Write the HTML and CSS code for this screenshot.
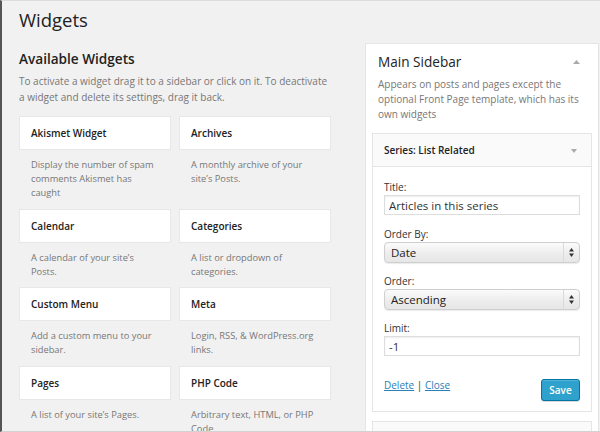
FILE: index.html
```html
<!DOCTYPE html>
<html lang="en">
<head>
<meta charset="utf-8">
<title>Widgets</title>
<link rel="stylesheet" href="styles.css">
</head>
<body>
<div class="screen">
  <span class="menu-marker"></span>
  <h1 class="page-title">Widgets</h1>
  <div class="columns">
    <section class="available">
      <h2 class="available-title">Available Widgets</h2>
      <p class="intro">To activate a widget drag it to a sidebar or click on it. To deactivate a widget and delete its settings, drag it back.</p>
      <div class="widget-grid">
        <div class="widget"><div class="widget-top">Akismet Widget</div><p class="widget-desc">Display the number of spam comments Akismet has caught</p></div>
        <div class="widget"><div class="widget-top">Archives</div><p class="widget-desc">A monthly archive of your site’s Posts.</p></div>
        <div class="widget"><div class="widget-top">Calendar</div><p class="widget-desc">A calendar of your site’s Posts.</p></div>
        <div class="widget"><div class="widget-top">Categories</div><p class="widget-desc">A list or dropdown of categories.</p></div>
        <div class="widget"><div class="widget-top">Custom Menu</div><p class="widget-desc">Add a custom menu to your sidebar.</p></div>
        <div class="widget"><div class="widget-top">Meta</div><p class="widget-desc">Login, RSS, &amp; WordPress.org links.</p></div>
        <div class="widget"><div class="widget-top">Pages</div><p class="widget-desc">A list of your site’s Pages.</p></div>
        <div class="widget"><div class="widget-top">PHP Code</div><p class="widget-desc">Arbitrary text, HTML, or PHP Code</p></div>
      </div>
    </section>
    <aside class="sidebar-panel">
      <div class="sidebar-head">
        <h3 class="sidebar-title">Main Sidebar</h3>
        <svg class="arrow-up" width="7" height="4" viewBox="0 0 7 4"><path d="M0 4L3.5 0L7 4z" fill="#aaa"/></svg>
      </div>
      <p class="sidebar-desc">Appears on posts and pages except the optional Front Page template, which has its own widgets</p>
      <div class="sidebar-widgets">
        <div class="sw">
          <div class="sw-top">
            <span class="sw-title">Series: List Related</span>
            <svg class="arrow-down" width="6" height="4" viewBox="0 0 6 4"><path d="M0 0L3 4L6 0z" fill="#aaa"/></svg>
          </div>
          <div class="sw-form">
            <div class="field">
              <label class="field-label">Title:</label>
              <input class="text-input" type="text" value="Articles in this series">
            </div>
            <div class="field field-select">
              <label class="field-label">Order By:</label>
              <div class="select"><span class="select-val">Date</span><span class="select-arrows"><svg width="5" height="9" viewBox="0 0 5 9"><path d="M0 3.6L2.5 0L5 3.6z M0 5.4L2.5 9L5 5.4z" fill="#333"/></svg></span></div>
            </div>
            <div class="field field-select">
              <label class="field-label">Order:</label>
              <div class="select"><span class="select-val">Ascending</span><span class="select-arrows"><svg width="5" height="9" viewBox="0 0 5 9"><path d="M0 3.6L2.5 0L5 3.6z M0 5.4L2.5 9L5 5.4z" fill="#333"/></svg></span></div>
            </div>
            <div class="field">
              <label class="field-label">Limit:</label>
              <input class="text-input" type="text" value="-1">
            </div>
            <div class="actions">
              <span class="links"><a class="link" href="#">Delete</a> | <a class="link" href="#">Close</a></span>
              <button class="save" type="button">Save</button>
            </div>
          </div>
        </div>
        <div class="sw sw-collapsed"></div>
      </div>
    </aside>
  </div>
</div>
</body>
</html>
```
FILE: styles.css
```css
html, body {
  margin: 0;
  padding: 0;
  background: #f1f1f1;
}
body {
  font-family: "Open Sans", "DejaVu Sans", sans-serif;
  color: #333;
}
.screen {
  position: relative;
  width: 600px;
  height: 432px;
  box-sizing: border-box;
  border-top: 1px solid #dcdcdc;
  border-left: 2px solid #555;
  border-bottom: 1px solid #d2d2d2;
  overflow: hidden;
}
.menu-marker {
  position: absolute;
  left: -2px;
  top: 151px;
  width: 2px;
  height: 28px;
  background: #2ea2cc;
}
.menu-marker::after {
  content: "";
  position: absolute;
  left: 1px;
  top: 9px;
  width: 1px;
  height: 9px;
  background: #f1f1f1;
}
.page-title {
  margin: 0;
  padding: 7px 0 0 17px;
  font-size: 18.5px;
  line-height: 24px;
  font-weight: 400;
  color: #222;
}
.columns {
  display: flex;
  align-items: flex-start;
  margin-top: 11px;
  padding-left: 17px;
}
.available {
  width: 312px;
  padding-top: 7px;
}
.available-title {
  margin: 0;
  font-size: 13.6px;
  line-height: 18px;
  font-weight: 600;
  color: #222;
}
.intro {
  margin: 5px 0 0;
  font-size: 10px;
  line-height: 16px;
  color: #777;
}
.widget-grid {
  margin-top: 11px;
  display: grid;
  grid-template-columns: 152px 152px;
  column-gap: 8px;
}
.widget-top {
  height: 34px;
  box-sizing: border-box;
  border: 1px solid #e7e7e7;
  background: #fff;
  padding: 0 11px;
  font-size: 10px;
  line-height: 32px;
  font-weight: 600;
  color: #222;
}
.widget-desc {
  margin: 0;
  padding: 8px 12px 8.5px;
  font-size: 9.3px;
  line-height: 14px;
  color: #777;
}
.sidebar-panel {
  margin-left: 34px;
  width: 234px;
  box-sizing: border-box;
  border: 1px solid #e5e5e5;
  background: #fff;
}
.sidebar-head {
  display: flex;
  justify-content: space-between;
  align-items: center;
  padding: 9px 18px 0 12px;
}
.sidebar-title {
  margin: 0;
  font-size: 13.6px;
  line-height: 18px;
  font-weight: 400;
  color: #222;
}
.arrow-up {
  display: block;
  margin-top: -1px;
}
.sidebar-desc {
  margin: 5.5px 0 0;
  padding: 0 8px 0 12px;
  font-size: 10px;
  line-height: 15px;
  color: #777;
}
.sidebar-widgets {
  padding: 11.5px 6px 0;
}
.sw {
  border: 1px solid #e5e5e5;
  background: #fff;
}
.sw-top {
  height: 33px;
  box-sizing: border-box;
  border-bottom: 1px solid #e5e5e5;
  background: #fafafa;
  display: flex;
  justify-content: space-between;
  align-items: center;
  padding: 0 14px 0 11px;
}
.sw-title {
  font-size: 10px;
  font-weight: 600;
  color: #222;
  line-height: 32px;
}
.arrow-down {
  display: block;
  margin-top: 1px;
}
.sw-form {
  padding: 13px 11px 10px;
}
.field {
  margin-bottom: 12px;
}
.field-select {
  margin-bottom: 11px;
}
.field-label {
  display: block;
  font-size: 10px;
  line-height: 14px;
  color: #333;
  margin-bottom: 1px;
}
.text-input {
  display: block;
  width: 100%;
  height: 20px;
  box-sizing: border-box;
  margin: 0;
  padding: 0 4px;
  border: 1px solid #ddd;
  border-radius: 0;
  box-shadow: inset 0 1px 2px rgba(0, 0, 0, 0.07);
  background: #fff;
  font-family: "Open Sans", "DejaVu Sans", sans-serif;
  font-size: 11.5px;
  line-height: 18px;
  color: #333;
  outline: none;
}
.select {
  display: flex;
  height: 21px;
  box-sizing: border-box;
  border: 1px solid #cfcfcf;
  border-radius: 4px;
  background: linear-gradient(#fbfbfb, #ececec 60%, #e6e6e6);
  box-shadow: 0 1px 1px rgba(0, 0, 0, 0.08);
}
.select-val {
  flex: 1;
  padding-left: 6px;
  font-size: 11.5px;
  line-height: 19px;
  color: #222;
}
.select-arrows {
  width: 15px;
  border-left: 1px solid #dadada;
  display: flex;
  align-items: center;
  justify-content: center;
}
.select-arrows svg {
  display: block;
}
.actions {
  display: flex;
  justify-content: space-between;
  align-items: flex-start;
  margin-top: 23px;
}
.links {
  font-size: 10px;
  line-height: 12px;
  color: #333;
}
.link {
  color: #2a80b9;
  text-decoration: underline;
}
.save {
  height: 22px;
  width: 39px;
  padding: 0;
  margin: 0;
  border: 1px solid #0074a2;
  border-radius: 3px;
  background: #2ea2cc;
  box-shadow: inset 0 1px 0 rgba(120, 200, 230, 0.5), 0 1px 0 rgba(0, 0, 0, 0.15);
  color: #fff;
  font-family: "Open Sans", "DejaVu Sans", sans-serif;
  font-size: 10px;
  font-weight: 600;
  line-height: 20px;
}
.sw-collapsed {
  margin-top: 9px;
  height: 40px;
  background: #fafafa;
}
```
